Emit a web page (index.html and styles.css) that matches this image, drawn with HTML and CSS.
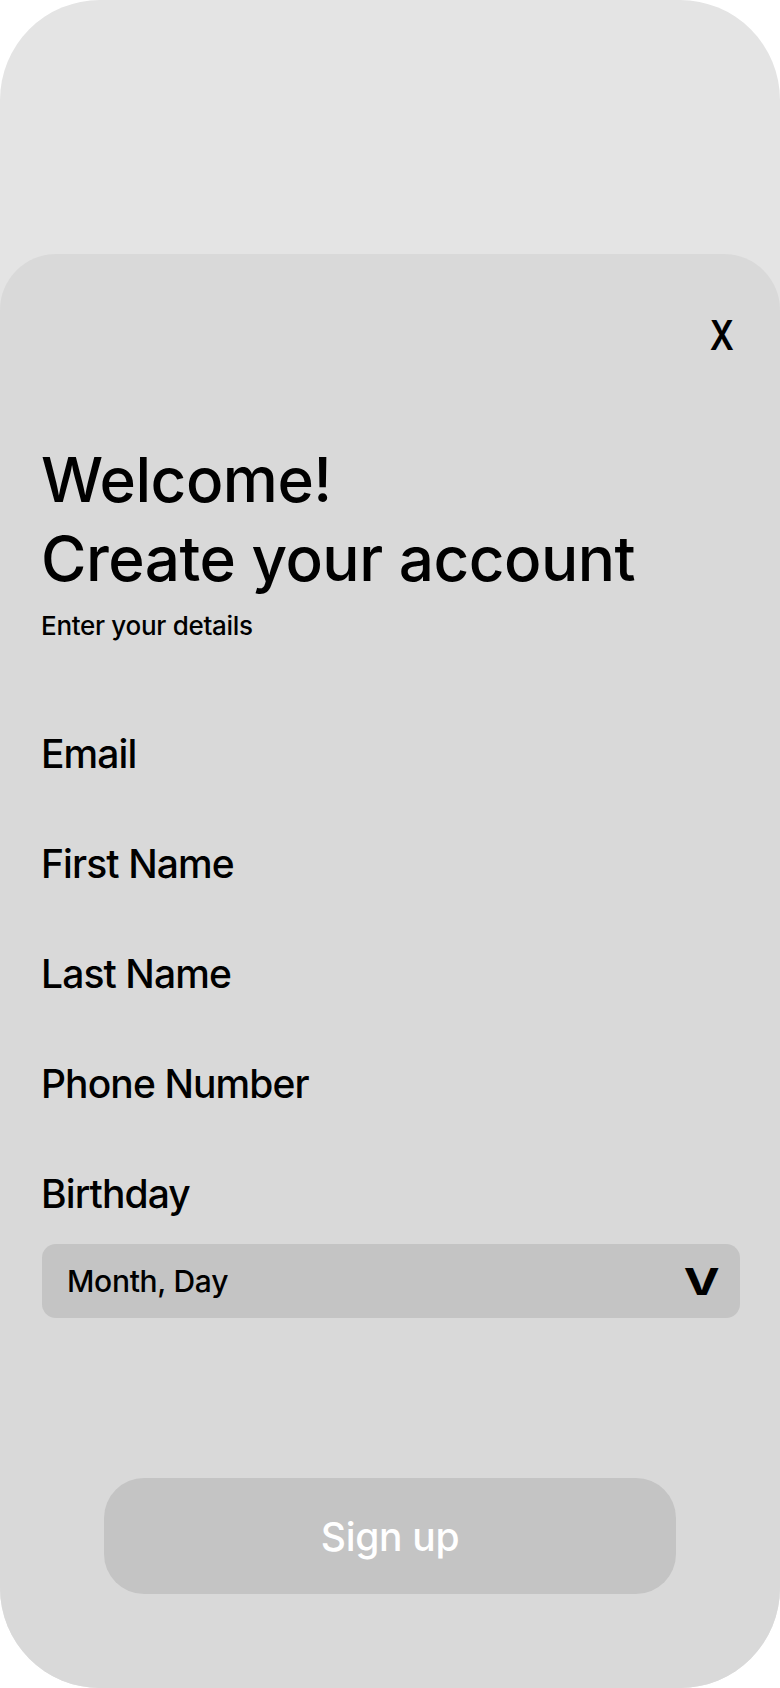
FILE: index.html
```html
<!DOCTYPE html>
<html lang="en">
<head>
<meta charset="utf-8">
<title>Create your account</title>
<link rel="stylesheet" href="styles.css">
</head>
<body>
<div class="phone">
  <div class="backdrop"></div>
  <section class="sheet">
    <div class="sheet-head">
      <button class="close" type="button" aria-label="Close">X</button>
    </div>
    <h1 class="title">Welcome!<br>Create your account</h1>
    <p class="subtitle">Enter your details</p>
    <div class="fields">
      <div class="field">Email</div>
      <div class="field">First Name</div>
      <div class="field">Last Name</div>
      <div class="field">Phone Number</div>
      <div class="field">Birthday</div>
    </div>
    <div class="select">
      <span class="select-text">Month, Day</span>
      <span class="select-caret">V</span>
    </div>
    <div class="actions">
      <button class="signup" type="button">Sign up</button>
    </div>
  </section>
</div>
</body>
</html>
```
FILE: styles.css
```css
* { box-sizing: border-box; }
html, body { margin: 0; padding: 0; background: #ffffff; }
body { font-family: "Inter", "Liberation Sans", sans-serif; color: #000; }

.phone {
  width: 780px;
  height: 1688px;
  background: #e4e4e4;
  border-radius: 100px;
  overflow: hidden;
  display: flex;
  flex-direction: column;
}
.backdrop { height: 254px; flex: none; }
.sheet {
  flex: 1;
  background: #d9d9d9;
  border-radius: 56px 56px 0 0;
  padding: 0 40px 0 41px;
  display: flex;
  flex-direction: column;
}
.sheet-head {
  display: flex;
  justify-content: flex-end;
  padding-top: 32px;
  height: 130px;
}
.close {
  border: 0;
  background: none;
  padding: 0;
  font-family: inherit;
  font-size: 41px;
  font-weight: 600;
  line-height: 48px;
  color: #000;
  margin-right: 3px;
  transform: scaleX(0.82);
}
.title {
  margin: 56px 0 0;
  font-size: 62px;
  font-weight: 500;
  line-height: 79px;
  letter-spacing: -0.5px;
}
.subtitle {
  margin: 12px 0 0;
  font-size: 26px;
  font-weight: 500;
  line-height: 32px;
  letter-spacing: -0.3px;
}
.fields {
  margin-top: 88px;
  display: flex;
  flex-direction: column;
  gap: 62px;
}
.field {
  font-size: 39px;
  line-height: 48px;
  font-weight: 500;
  letter-spacing: -0.9px;
}
.select {
  margin-top: 26px;
  height: 74px;
  width: 698px;
  margin-left: 1px;
  background: #c4c4c4;
  border-radius: 14px;
  display: flex;
  align-items: center;
  justify-content: space-between;
  padding: 0 20px 0 25px;
}
.select-text { font-size: 30px; font-weight: 500; letter-spacing: -0.3px; }
.select-caret {
  display: inline-block;
  font-size: 37px;
  font-weight: 700;
  line-height: 1;
  transform: scaleX(1.3);
  margin-right: 4px;
}
.actions {
  margin-top: 160px;
  display: flex;
  padding-left: 63px;
}
.signup {
  width: 572px;
  height: 116px;
  border: 0;
  border-radius: 40px;
  background: #c4c4c4;
  color: #ffffff;
  font-family: inherit;
  font-size: 39px;
  font-weight: 500;
  letter-spacing: -0.3px;
}
```
